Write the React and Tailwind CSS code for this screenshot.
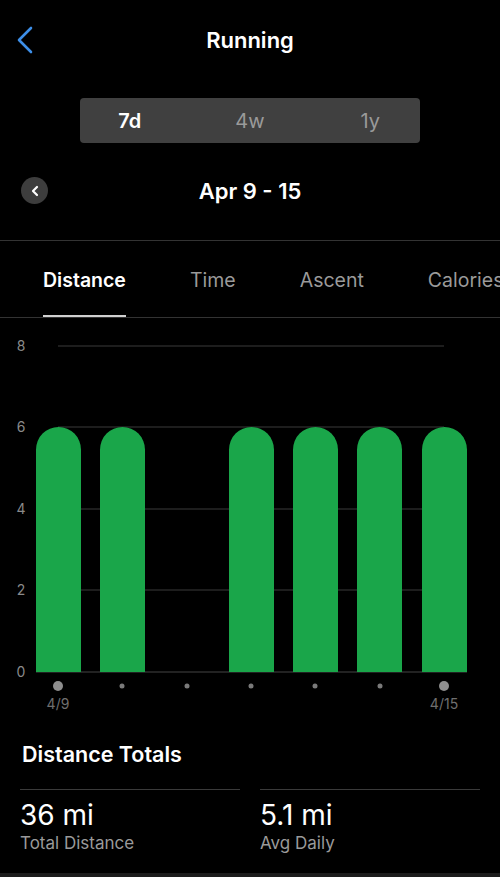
const bars = [36, 100, null, 229, 293, 357, 422];
const centers = [58, 122, 187, 251, 315, 380, 444];
const grid = [
  { y: 28, label: "8" },
  { y: 109, label: "6" },
  { y: 191, label: "4" },
  { y: 272, label: "2" },
];

const Chart = () => (
  <svg width="500" height="402" viewBox="0 0 500 402" className="block">
    {grid.map((g) => (
      <g key={g.label}>
        <line x1="58" x2="444" y1={g.y} y2={g.y} stroke="#3a3a3a" strokeWidth="1" />
        <text x="21" y={g.y + 5} textAnchor="middle" fontSize="14" fill="#8a8a8a" fontFamily="Inter, sans-serif">
          {g.label}
        </text>
      </g>
    ))}
    <line x1="36" x2="467" y1="354" y2="354" stroke="#444" strokeWidth="1" />
    <text x="21" y="359" textAnchor="middle" fontSize="14" fill="#8a8a8a" fontFamily="Inter, sans-serif">
      0
    </text>
    {bars.map((x, i) =>
      x === null ? null : (
        <path key={i} d={`M${x} 354 V131.5 A22.5 22.5 0 0 1 ${x + 45} 131.5 V354 Z`} fill="#1aa64a" />
      )
    )}
    {centers.map((cx, i) => {
      const big = i === 0 || i === centers.length - 1;
      return <circle key={i} cx={cx} cy="368" r={big ? 5 : 2.5} fill={big ? "#8e8e8e" : "#7a7a7a"} />;
    })}
    <text x="58" y="391" textAnchor="middle" fontSize="14" fill="#6f6f6f" fontFamily="Inter, sans-serif">
      4/9
    </text>
    <text x="444" y="391" textAnchor="middle" fontSize="14" fill="#6f6f6f" fontFamily="Inter, sans-serif">
      4/15
    </text>
  </svg>
);

const Stat = ({ value, label }) => (
  <div className="border-t border-[#3a3a3a] pt-[9px]">
    <div className="text-[28px] leading-[32px] text-white">{value}</div>
    <div className="text-[17px] leading-[20px] mt-[2px] text-[#9a9a9a]">{label}</div>
  </div>
);

export default function App() {
  return (
    <div className="w-[500px] h-[877px] bg-black flex flex-col overflow-hidden font-['Inter',sans-serif]">
      <div className="h-[80px] grid grid-cols-[1fr_auto_1fr] items-center">
        <div className="pl-[16px]">
          <svg width="20" height="28" viewBox="0 0 20 28" className="block">
            <path d="M15 2 L3 14 L15 26" fill="none" stroke="#3d8fe8" strokeWidth="2.6" strokeLinecap="round" strokeLinejoin="round" />
          </svg>
        </div>
        <div className="text-white text-[22px] font-semibold">Running</div>
        <div />
      </div>

      <div className="mt-[18px] mx-[80px] h-[45px] rounded-[4px] bg-[#404040] grid grid-cols-3 items-center text-[20px]">
        <div className="text-center text-white font-semibold pr-[14px]">7d</div>
        <div className="text-center text-[#9a9a9a]">4w</div>
        <div className="text-center text-[#9a9a9a] pl-[14px]">1y</div>
      </div>

      <div className="mt-[33px] h-[30px] relative flex items-center justify-center">
        <div className="absolute left-[21px] top-[1px] w-[27px] h-[27px] rounded-full bg-[#3d3d3d] flex items-center justify-center">
          <svg width="10" height="12" viewBox="0 0 10 12" className="block">
            <path d="M7 2 L3 6 L7 10" fill="none" stroke="#fff" strokeWidth="2.2" strokeLinecap="round" strokeLinejoin="round" />
          </svg>
        </div>
        <div className="text-white text-[22px] font-semibold">Apr 9 - 15</div>
      </div>

      <div className="mt-[34px] border-t border-[#333]" />

      <div className="h-[77px] border-b border-[#333] flex gap-[64px] pl-[43px] overflow-hidden whitespace-nowrap text-[19.5px]">
        <div className="relative flex items-center pt-[3px] text-white font-semibold">
          Distance
          <div className="absolute left-0 right-0 bottom-0 h-[2px] bg-[#d0d0d0]" />
        </div>
        <div className="flex items-center pt-[3px] text-[#9a9a9a]">Time</div>
        <div className="flex items-center pt-[3px] text-[#9a9a9a]">Ascent</div>
        <div className="flex items-center pt-[3px] text-[#9a9a9a]">Calories</div>
      </div>

      <Chart />

      <div className="mt-[20px] px-[22px] text-white text-[21.5px] leading-[28px] font-semibold">Distance Totals</div>

      <div className="mt-[21px] px-[20px] grid grid-cols-2 gap-[20px]">
        <Stat value="36 mi" label="Total Distance" />
        <Stat value="5.1 mi" label="Avg Daily" />
      </div>

      <div className="mt-auto h-[4px] bg-[#1c1c1c]" />
    </div>
  );
}
